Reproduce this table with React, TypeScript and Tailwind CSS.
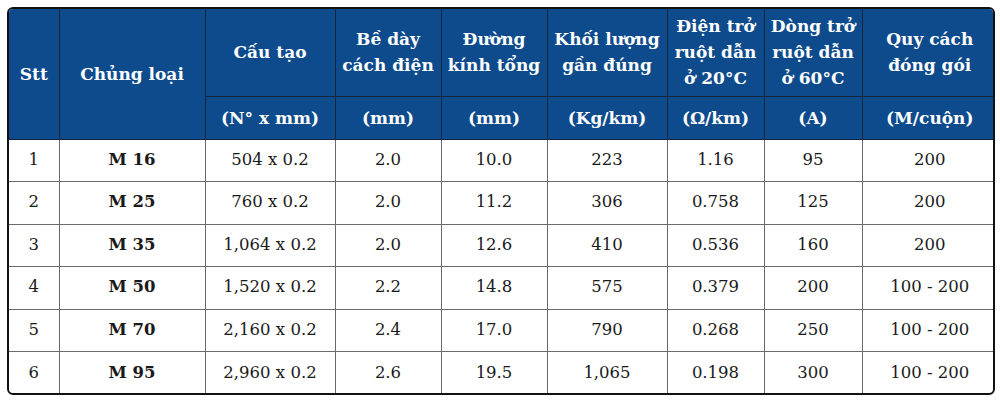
const rows = [
  ['1', 'M 16', '504 x 0.2', '2.0', '10.0', '223', '1.16', '95', '200'],
  ['2', 'M 25', '760 x 0.2', '2.0', '11.2', '306', '0.758', '125', '200'],
  ['3', 'M 35', '1,064 x 0.2', '2.0', '12.6', '410', '0.536', '160', '200'],
  ['4', 'M 50', '1,520 x 0.2', '2.2', '14.8', '575', '0.379', '200', '100 - 200'],
  ['5', 'M 70', '2,160 x 0.2', '2.4', '17.0', '790', '0.268', '250', '100 - 200'],
  ['6', 'M 95', '2,960 x 0.2', '2.6', '19.5', '1,065', '0.198', '300', '100 - 200'],
];

const widths = [50, 146, 130, 106, 106, 120, 97, 98, 135];

const th = 'border border-[#16263a] font-bold text-white text-center align-middle px-0';
const td = 'border border-[#6a6a6a] text-center align-middle text-[#1a1a1a]';

export default function App() {
  return (
    <div className="w-[1000px] h-[400px] bg-white pt-[7px] pl-[7px]" style={{ fontFamily: '"DejaVu Serif", serif' }}>
      <div className="w-[988px] h-[388px] border-2 border-[#111] rounded-md overflow-hidden">
        <table className="w-full h-full table-fixed border-collapse border-hidden">
          <colgroup>
            {widths.map((w, i) => (
              <col key={i} style={{ width: w }} />
            ))}
          </colgroup>
          <thead className="bg-[#0d4b8d] text-[17px] leading-[26px]">
            <tr className="h-[87px]">
              <th rowSpan={2} className={th}>Stt</th>
              <th rowSpan={2} className={th}>Chủng loại</th>
              <th className={th}>Cấu tạo</th>
              <th className={th}>Bề dày<br />cách điện</th>
              <th className={th}>Đường<br />kính tổng</th>
              <th className={th}>Khối lượng<br />gần đúng</th>
              <th className={th}>Điện trở<br />ruột dẫn<br />ở 20°C</th>
              <th className={th}>Dòng trở<br />ruột dẫn<br />ở 60°C</th>
              <th className={th}>Quy cách<br />đóng gói</th>
            </tr>
            <tr className="h-[43px]">
              <th className={th}>(N° x mm)</th>
              <th className={th}>(mm)</th>
              <th className={th}>(mm)</th>
              <th className={th}>(Kg/km)</th>
              <th className={th}>(Ω/km)</th>
              <th className={th}>(A)</th>
              <th className={th}>(M/cuộn)</th>
            </tr>
          </thead>
          <tbody className="text-[16.5px]">
            {rows.map((r) => (
              <tr key={r[0]} className="h-[42.5px]">
                {r.map((c, i) => (
                  <td key={i} className={td + (i === 1 ? ' font-bold' : '')}>{c}</td>
                ))}
              </tr>
            ))}
          </tbody>
        </table>
      </div>
    </div>
  );
}
